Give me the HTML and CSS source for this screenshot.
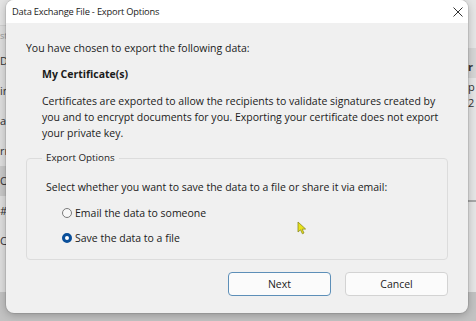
FILE: index.html
```html
<!DOCTYPE html>
<html lang="en">
<head>
    <meta charset="UTF-8">
    <title>Data Exchange File - Export Options</title>
    <link rel="stylesheet" href="styles.css">
</head>
<body>
<div class="backdrop">
    <div class="side-list">
        <div class="side-head"></div>
        <div class="side-item faint">st</div>
        <div class="side-item">Ds</div>
        <div class="side-item">in</div>
        <div class="side-item">al</div>
        <div class="side-item">rr</div>
        <div class="side-item active">Ov</div>
        <div class="side-item">#1</div>
        <div class="side-item">Ce</div>
    </div>
    <div class="side-right">
        <div class="right-head">r</div>
        <div class="right-row">p</div>
        <div class="right-row">2</div>
        <div class="right-rule"></div>
    </div>
</div>

<div class="dialog">
    <div class="title-bar">
        <span class="title">Data Exchange File - Export Options</span>
        <svg class="close" width="10" height="10" viewBox="0 0 10 10">
            <path d="M0.5 0.5 L9.5 9.5 M9.5 0.5 L0.5 9.5" stroke="#333" stroke-width="1" fill="none"/>
        </svg>
    </div>
    <div class="dialog-body">
        <p class="intro">You have chosen to export the following data:</p>
        <p class="cert-name">My Certificate(s)</p>
        <p class="cert-desc">Certificates are exported to allow the recipients to validate signatures created by you and to encrypt documents for you. Exporting your certificate does not export your private key.</p>

        <fieldset class="options">
            <legend>Export Options</legend>
            <p class="options-hint">Select whether you want to save the data to a file or share it via email:</p>
            <label class="radio"><span class="radio-dot"></span>Email the data to someone</label>
            <label class="radio"><span class="radio-dot checked"></span>Save the data to a file</label>
        </fieldset>

        <div class="buttons">
            <button class="btn default" type="button">Next</button>
            <button class="btn" type="button">Cancel</button>
        </div>
    </div>
</div>

<svg class="pointer" width="10" height="14" viewBox="0 0 10 14">
    <path d="M1 1 L1 11 L3.5 8.8 L5.4 12.8 L7 12 L5.2 8.2 L8.6 8 Z" fill="#e8e21a" stroke="#8a8a20" stroke-width="0.8"/>
</svg>
</body>
</html>
```

FILE: styles.css
```css
* {
    box-sizing: border-box;
}

body {
    margin: 0;
    width: 476px;
    height: 321px;
    overflow: hidden;
    position: relative;
    background: #c2c2c2;
    font-family: "Open Sans", "Noto Sans", sans-serif;
    font-size: 10.5px;
    color: #1b1b1b;
}

p {
    margin: 0;
}

/* window behind the dialog */
.backdrop {
    display: flex;
    justify-content: space-between;
    height: 321px;
}

.side-list {
    width: 40px;
    height: 292px;
    background: #dedede;
    font-size: 11px;
    color: #333;
}

.side-head {
    height: 26px;
    background: #e4e4e4;
    border-bottom: 1px solid #d0d0d0;
}

.side-item {
    height: 30px;
    line-height: 30px;
    white-space: nowrap;
}

.side-item.faint {
    height: 20px;
    line-height: 20px;
    color: #999;
    font-size: 9px;
}

.side-item.active {
    background: #c9c9c9;
}

.side-right {
    width: 40px;
    height: 292px;
    background: #e6e6e6;
    padding-top: 48px;
    padding-left: 32px;
    color: #333;
    font-size: 11px;
}

.right-head {
    height: 30px;
    line-height: 38px;
    background: #d6d6d6;
    margin-left: -32px;
    padding-left: 32px;
    font-weight: bold;
}

.right-row {
    height: 14px;
    line-height: 14px;
    margin-top: 2px;
}

.right-rule {
    margin-top: 90px;
    margin-left: -32px;
    border-top: 2px solid #a8a8a8;
}

/* dialog */
.dialog {
    position: absolute;
    left: 6px;
    top: 0;
    width: 462px;
    height: 313px;
    border-radius: 8px;
    overflow: hidden;
    background: #f0f0f0;
    box-shadow: 0 2px 8px rgba(0, 0, 0, 0.25), 0 0 0 1px rgba(0, 0, 0, 0.08);
}

.title-bar {
    height: 23px;
    background: #fff;
    display: flex;
    align-items: center;
    justify-content: space-between;
    padding: 0 5px 0 6px;
}

.title {
    font-size: 9.3px;
    letter-spacing: -0.2px;
    color: #1a1a1a;
}

.close {
    margin-top: 1px;
}

.dialog-body {
    padding: 17px 20px 17px 20px;
    line-height: 16px;
}

.cert-name {
    margin-top: 10px;
    padding-left: 16px;
    font-weight: bold;
}

.cert-desc {
    margin-top: 11px;
    padding-left: 16px;
    width: 426px;
}

.options {
    margin: 9px 0 0 0;
    padding: 13px 0 13px 19px;
    border: 1px solid #dcdcdc;
    border-radius: 4px;
    min-width: 0;
}

.options legend {
    margin-left: -4px;
    padding: 0 4px 0 4px;
    line-height: 16px;
    font-size: 9.8px;
}

.radio {
    display: flex;
    align-items: center;
    gap: 3px;
    padding-left: 16px;
    margin-top: 10px;
    height: 16px;
}

.radio + .radio {
    margin-top: 9px;
}

.radio-dot {
    width: 10px;
    height: 10px;
    border-radius: 50%;
    border: 1px solid #7a7a7a;
    background: #f7f7f7;
}

.radio-dot.checked {
    border: 3px solid #0a4f9a;
    background: #fff;
}

.buttons {
    display: flex;
    justify-content: flex-end;
    gap: 14px;
    margin-top: 12px;
}

.btn {
    width: 103px;
    height: 24px;
    font-family: inherit;
    font-size: 10.5px;
    color: #1b1b1b;
    background: #fbfbfb;
    border: 1px solid #d3d3d3;
    border-radius: 4px;
    padding: 0;
}

.btn.default {
    border-color: #5d8fb8;
}

.pointer {
    position: absolute;
    left: 297px;
    top: 221px;
}
```
